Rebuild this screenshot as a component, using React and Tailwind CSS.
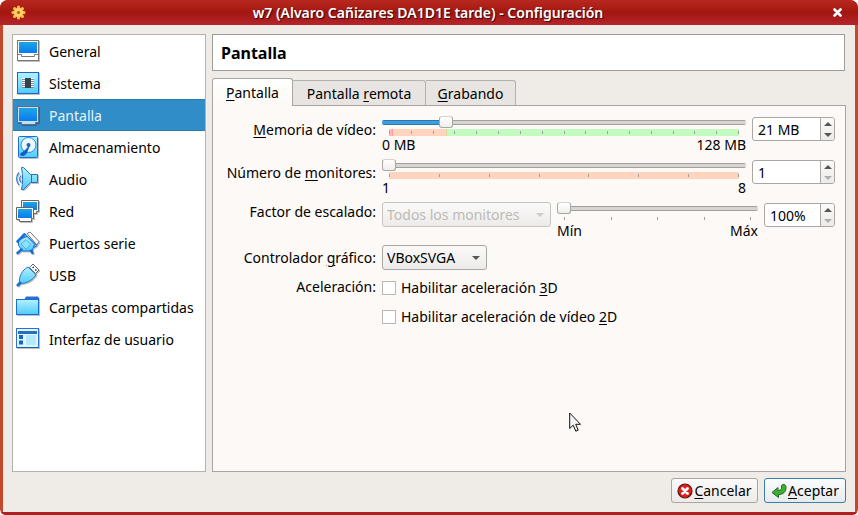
import React, { useState } from "react";

const Blues = () => (
  <svg width="0" height="0" className="absolute" aria-hidden="true">
    <defs>
      <linearGradient id="screen" x1="0" y1="0" x2="0" y2="1">
        <stop offset="0" stopColor="#1ca6e4" />
        <stop offset="1" stopColor="#0a7af0" />
      </linearGradient>
      <linearGradient id="ice" x1="0" y1="0" x2="0" y2="1">
        <stop offset="0" stopColor="#b4f1ff" />
        <stop offset="1" stopColor="#4fcbfb" />
      </linearGradient>
    </defs>
  </svg>
);

const Icon = ({ children }) => (
  <svg width="24" height="24" viewBox="0 0 24 24" className="shrink-0 drop-shadow-[1px_1px_0px_rgba(0,0,0,0.25)]" aria-hidden="true">
    {children}
  </svg>
);

const GeneralIcon = () => (
  <Icon>
    <rect x="1.5" y="1.5" width="21" height="20" fill="#fff" stroke="#777" />
    <rect x="3" y="3" width="18" height="11" fill="url(#screen)" />
    <path d="M1.500 15.500H5.500V17.500H18.500V15.500H22.500" fill="none" stroke="#777" />
  </Icon>
);

const SystemIcon = () => (
  <Icon>
    <rect x="1.500" y="1.500" width="21" height="21" fill="url(#ice)" stroke="#1a66cc" />
    <path d="M6 7.500H18M6 9.500H18M6 11.500H18M6 13.500H18M6 15.500H18" stroke="#fff" />
    <path d="M6 8.500H18M6 10.500H18M6 12.500H18M6 14.500H18M6 16.500H18" stroke="#6f8ea5" />
    <rect x="9" y="7" width="6" height="10" fill="#36404f" />
  </Icon>
);

const DisplayIcon = () => (
  <Icon>
    <path d="M1.500 3.500H22.500V19.500H19.500V21.500H5.500V19.500H1.500Z" fill="#c4def2" stroke="#5b7182" />
    <rect x="3" y="5" width="18" height="13" fill="url(#screen)" />
  </Icon>
);

const StorageIcon = () => (
  <Icon>
    <rect x="2.500" y="1.500" width="19" height="21" rx="1" fill="url(#ice)" stroke="#1a6ed2" />
    <circle cx="12.500" cy="10" r="7.500" fill="#e8faff" stroke="#2f86dc" />
    <circle cx="12.500" cy="10" r="2" fill="#3a5d9c" />
    <path d="M13 11.500L10.500 18C9 20.500 5 21.500 4.500 19.500C4.500 17.500 8 17.500 9.500 15Z" fill="#0f5fc4" stroke="#0f5fc4" />
  </Icon>
);

const AudioIcon = () => (
  <Icon>
    <path d="M3 5.500C-0.200 9 -0.200 14.500 3 18M5 8.500C3.500 10.500 3.500 13.500 5 15.500" fill="none" stroke="#2f7cd0" strokeWidth="1.200" />
    <path d="M5.500 0.500H7.500L14.500 7.500H21.500V15.500H14.500L7.500 22.500H5.500C7 16 7 8.500 5.500 0.500Z" fill="url(#ice)" stroke="#2a70c4" strokeLinejoin="round" />
    <path d="M15.500 7.500V15.500" stroke="#2a70c4" />
  </Icon>
);

const NetworkIcon = () => (
  <Icon>
    <path d="M5.500 1.500H22.500V12.500H20.500V14.500H8.500V12.500H5.500Z" fill="#fff" stroke="#666" />
    <rect x="7" y="3" width="14" height="8" fill="url(#screen)" />
    <path d="M0.500 8.500H17.500V19.500H15.500V22.500H3.500V20.500H0.500Z" fill="#fff" stroke="#666" />
    <rect x="2" y="10" width="14" height="9" fill="url(#screen)" />
  </Icon>
);

const SerialIcon = () => (
  <Icon>
    <path d="M11 2.500L14 1L23 10.500L21 14Z" fill="#fff" stroke="#777" />
    <path d="M8.500 2.500L21 14.500L18 16.500L6 4.500Z" fill="#6ab9f2" stroke="#1a6ed2" />
    <path d="M2.500 9L7 7L11 5.500L18.500 13L16 20H6L2.500 14Z" fill="url(#ice)" stroke="#1a6ed2" strokeLinejoin="round" />
    <path d="M1.500 10.500L8.500 3.500M5.500 18.500L1.500 22M15 19.500L16.500 22" stroke="#1a6ed2" strokeWidth="2.500" strokeLinecap="round" />
    <path d="M5 13L10 8.500L15 13.500L10 18Z" fill="#8be2ff" stroke="#59aee8" />
  </Icon>
);

const UsbIcon = () => (
  <Icon>
    <path d="M13.500 4.500L17 1L23 7L19.500 10.500Z" fill="#fff" stroke="#666" />
    <path d="M16.500 4.500H18M19 7H20.500" stroke="#333" strokeWidth="1.500" />
    <path d="M12 4L20 11.500C18 16 11 21 3.500 20.500C2.500 14 6 7 12 4Z" fill="url(#ice)" stroke="#2b74b8" strokeLinejoin="round" />
    <path d="M2 22L4 20" stroke="#1a6ed2" strokeWidth="3" strokeLinecap="round" />
  </Icon>
);

const FolderIcon = () => (
  <Icon>
    <path d="M8 5L10 1.500H22L23 3V8H8Z" fill="#2a72cf" />
    <rect x="0.500" y="4.500" width="22" height="15" fill="url(#ice)" stroke="#1a6ed2" />
  </Icon>
);

const InterfaceIcon = () => (
  <Icon>
    <rect x="0.500" y="1.500" width="22" height="19" fill="#dff6ff" stroke="#2a72cf" />
    <rect x="2" y="4" width="19" height="3" fill="#2a6cc4" />
    <path d="M3 8H7V12H3ZM3 13.500H7V17.500H3Z" fill="#1565c0" />
    <rect x="10" y="8" width="10" height="10" fill="#b4e9fb" />
    <path d="M1 20.500H22.500" stroke="#0d62bd" />
  </Icon>
);

const SECTIONS = [
  ["General", GeneralIcon],
  ["Sistema", SystemIcon],
  ["Pantalla", DisplayIcon],
  ["Almacenamiento", StorageIcon],
  ["Audio", AudioIcon],
  ["Red", NetworkIcon],
  ["Puertos serie", SerialIcon],
  ["USB", UsbIcon],
  ["Carpetas compartidas", FolderIcon],
  ["Interfaz de usuario", InterfaceIcon],
];

const Key = ({ children }) => <u className="underline decoration-1 underline-offset-2">{children}</u>;

const Ticks = ({ count, className = "" }) => (
  <div className={`mx-[7px] mt-px flex h-[7px] items-center justify-between ${className}`} aria-hidden="true">
    {Array.from({ length: count }, (_, i) => (
      <span key={i} className="h-[3px] w-px bg-[#a39d98]" />
    ))}
  </div>
);

function Slider({ id, label, min, max, value, onChange, ticks, low, high, band, filled }) {
  const fill = filled
    ? "[&::-webkit-slider-runnable-track]:bg-[linear-gradient(180deg,rgba(0,0,0,0.25)_1px,transparent_1px,transparent_4px,rgba(0,0,0,0.25)_4px),linear-gradient(90deg,#3d9de0_17%,#d8d5d1_17%)]"
    : "[&::-webkit-slider-runnable-track]:bg-[linear-gradient(180deg,rgba(0,0,0,0.25)_1px,transparent_1px,transparent_4px,rgba(0,0,0,0.25)_4px),linear-gradient(90deg,#d8d5d1,#d8d5d1)]";
  return (
    <div className="min-w-0 flex-1">
      <input
        id={id}
        type="range"
        aria-label={label}
        min={min}
        max={max}
        value={value}
        onChange={(e) => onChange(Number(e.target.value))}
        className={`block h-3 w-full appearance-none bg-transparent [&::-webkit-slider-runnable-track]:h-[5px] [&::-webkit-slider-runnable-track]:rounded-xs [&::-webkit-slider-thumb]:-mt-1 [&::-webkit-slider-thumb]:h-3 [&::-webkit-slider-thumb]:w-[14px] [&::-webkit-slider-thumb]:appearance-none [&::-webkit-slider-thumb]:rounded-[3px] [&::-webkit-slider-thumb]:border [&::-webkit-slider-thumb]:border-[#aaa7a3] [&::-webkit-slider-thumb]:border-t-[#d6d3d0] [&::-webkit-slider-thumb]:bg-linear-to-b [&::-webkit-slider-thumb]:from-white [&::-webkit-slider-thumb]:to-[#f0eeec] ${fill}`}
      />
      <Ticks count={ticks} className={band} />
      <div className="mt-px flex justify-between leading-4">
        <span>{low}</span>
        <span>{high}</span>
      </div>
    </div>
  );
}

function SpinBox({ id, value, width, atMin, label }) {
  return (
    <div className={`mt-px flex h-6 shrink-0 overflow-hidden rounded-[3px] border border-[#aaa7a3] bg-white ${width}`}>
      <input id={id} aria-label={label} defaultValue={value} className="w-0 min-w-0 flex-1 pt-0.5 pl-[5px] outline-none" />
      <div className="flex w-[14px] flex-col border-l border-[#aaa7a3] bg-linear-to-b from-[#fbfaf9] to-[#edebe9]">
        <button aria-label="Aumentar" className="flex flex-1 items-center justify-center text-[#555]">
          <svg width="8" height="4" viewBox="0 0 8 4"><path d="M0 4L4 0L8 4Z" fill="currentColor" /></svg>
        </button>
        <button aria-label="Reducir" className={`flex flex-1 items-center justify-center ${atMin ? "text-[#b0aeac]" : "text-[#555]"}`}>
          <svg width="8" height="4" viewBox="0 0 8 4"><path d="M0 0L4 4L8 0Z" fill="currentColor" /></svg>
        </button>
      </div>
    </div>
  );
}

function Combo({ id, label, value, width, disabled }) {
  return (
    <div className={`relative h-[25px] shrink-0 ${width} ${disabled ? "text-[#bdbab7]" : "text-black"}`}>
      <select
        id={id}
        aria-label={label}
        disabled={disabled}
        className={`h-full w-full appearance-none rounded-[3px] border bg-linear-to-b from-[#fbfaf9] to-[#ecebe9] pl-1 opacity-100 ${disabled ? "border-[#c6c3c0]" : "border-[#aaa7a3]"}`}
      >
        <option>{value}</option>
      </select>
      <svg width="8" height="4" viewBox="0 0 8 4" className={`pointer-events-none absolute top-[11px] right-[7px] ${disabled ? "text-[#cfccc9]" : "text-[#555]"}`}>
        <path d="M0 0L4 4L8 0Z" fill="currentColor" />
      </svg>
    </div>
  );
}

const Check = ({ id, children }) => (
  <div className="flex h-[23px] items-center gap-[5px]">
    <input id={id} type="checkbox" className="size-[14px] appearance-none border border-[#bbb8b4] bg-white checked:bg-[#308cc6]" />
    <label htmlFor={id}>{children}</label>
  </div>
);

export default function App() {
  const [memory, setMemory] = useState(21);
  const [monitors, setMonitors] = useState(1);
  const [scale, setScale] = useState(100);

  return (
    <div className="flex min-h-screen flex-col bg-white font-['Noto_Sans','Open_Sans',sans-serif] text-[14px] leading-5 text-black">
      <Blues />
      <div className="flex flex-1 flex-col overflow-hidden rounded-t-lg rounded-b-md bg-[#c4482c]">
        <header className="flex h-[25px] items-center bg-linear-to-b from-[#b8281f] via-[#a3160f] to-[#b5242a] pr-[13px] pl-[11px] text-white">
          <svg width="15" height="15" viewBox="0 0 15 15" aria-hidden="true">
            <g stroke="#ffbd3b" strokeWidth="3.200" strokeLinecap="round">
              <path d="M7.500 2V13M2 7.500H13M3.600 3.600L11.400 11.400M11.400 3.600L3.600 11.400" />
            </g>
            <circle cx="7.500" cy="7.500" r="4.500" fill="#ffd166" />
            <circle cx="7.500" cy="7.500" r="1.500" fill="#c4561a" />
          </svg>
          <h1 className="flex-1 text-center font-semibold text-shadow-[1px_1px_1px_rgba(0,0,0,0.7)]">
            w7 (Alvaro Cañizares DA1D1E tarde) - Configuración
          </h1>
          <button aria-label="Cerrar" className="flex w-[15px] justify-center">
            <svg width="9" height="9" viewBox="0 0 9 9"><path d="M1.500 1.500L7.500 7.500M7.500 1.500L1.500 7.500" stroke="#fff" strokeWidth="2.600" strokeLinecap="round" /></svg>
          </button>
        </header>

        <div className="mx-[3px] flex flex-1 flex-col gap-[6px] bg-[#efebe7] p-[9px]">
          <div className="flex flex-1 gap-[6px]">
            <nav className="w-[194px] shrink-0 border border-[#b5b2ae] bg-white">
              {SECTIONS.map(([name, Glyph]) => (
                <a
                  key={name}
                  href="#"
                  className={`flex h-8 items-center gap-[9px] pl-[3px] whitespace-nowrap ${name === "Pantalla" ? "border-y border-[#2a7db1] bg-[#308dc8] text-[#e8f3fa]" : ""}`}
                >
                  <Glyph />
                  <span className="pt-0.5">{name}</span>
                </a>
              ))}
            </nav>

            <main className="flex min-w-0 flex-1 flex-col">
              <h2 className="mr-px flex h-[37px] items-center border border-[#a09c98] bg-white pl-2 text-[16px] font-bold">Pantalla</h2>
              <div role="tablist" className="mt-[7px] flex items-end">
                <button role="tab" aria-selected="true" className="relative -mb-px h-7 w-[81px] rounded-t-[3px] border border-b-0 border-[#aaa7a3] bg-linear-to-b from-white to-[#fdf9f6]">
                  <Key>P</Key>antalla
                </button>
                <button role="tab" className="h-[25px] w-[133px] rounded-tr-[3px] border-t border-r border-[#b5b2ae] bg-[#e8e4e1] pt-0.5">
                  Pantalla <Key>r</Key>emota
                </button>
                <button role="tab" className="h-[25px] w-[90px] rounded-tr-[3px] border-t border-r border-[#b5b2ae] bg-[#e8e4e1] pt-0.5">
                  <Key>G</Key>rabando
                </button>
              </div>

              <section className="grid flex-1 grid-cols-[153px_minmax(0,1fr)] content-start gap-[6px] border border-[#a8a4a1] bg-[#fdf9f6] p-[10px] [&>label]:text-right [&>label]:whitespace-nowrap">
                <label htmlFor="memory" className="pt-1"><Key>M</Key>emoria de vídeo:</label>
                <div className="flex gap-[6px]">
                  <Slider id="memory-slider" label="Memoria de vídeo" min={0} max={128} value={memory} onChange={setMemory} ticks={17} low="0 MB" high="128 MB" filled
                    band="bg-[linear-gradient(90deg,#ffb9b4_0px,#ffb9b4_3px,#ff9f98_3px,#ff9f98_4px,#fed4be_4px,#fed4be_57px,#e2d893_57px,#e2d893_58px,#c3fac0_58px)]" />
                  <SpinBox id="memory" label="Memoria de vídeo" value="21 MB" width="w-[83px]" />
                </div>

                <label htmlFor="monitors" className="pt-1">Número de <Key>m</Key>onitores:</label>
                <div className="flex gap-[6px]">
                  <Slider id="monitors-slider" label="Número de monitores" min={1} max={8} value={monitors} onChange={setMonitors} ticks={8} low="1" high="8" band="bg-[#fed4be]" />
                  <SpinBox id="monitors" label="Número de monitores" value="1" width="w-[83px]" atMin />
                </div>

                <label htmlFor="scale-target">Factor de escalado:</label>
                <div className="flex gap-[6px]">
                  <Combo id="scale-target" label="Factor de escalado" value="Todos los monitores" width="w-[169px]" disabled />
                  <Slider id="scale-slider" label="Escala" min={100} max={200} value={scale} onChange={setScale} ticks={5} low="Mín" high="Máx" />
                  <SpinBox id="scale" label="Escala" value="100%" width="w-[71px]" atMin />
                </div>

                <label htmlFor="controller" className="pt-[3px]">Controlador <Key>g</Key>ráfico:</label>
                <Combo id="controller" label="Controlador gráfico" value="VBoxSVGA" width="w-[105px]" />

                <span className="pt-px text-right">Aceleración:</span>
                <Check id="accel3d">Habilitar aceleración <Key>3</Key>D</Check>
                <span />
                <Check id="accel2d">Habilitar aceleración de vídeo <Key>2</Key>D</Check>
              </section>
            </main>
          </div>

          <footer className="flex justify-end gap-[6px]">
            <button className="flex h-[25px] w-[87px] items-center justify-center gap-px rounded-[3px] border border-[#aaa7a3] bg-linear-to-b from-[#fbfaf9] to-[#edebe9]">
              <svg width="16" height="16" viewBox="0 0 16 16" className="shrink-0" aria-hidden="true">
                <circle cx="8" cy="8" r="7" fill="#e0201b" stroke="#5c1210" strokeWidth="1.200" />
                <path d="M5.500 5.500L10.500 10.500M10.500 5.500L5.500 10.500" stroke="#fff" strokeWidth="2.800" strokeLinecap="round" />
              </svg>
              <span><Key>C</Key>ancelar</span>
            </button>
            <button className="flex h-[25px] w-[82px] items-center justify-center gap-px rounded-[3px] border border-[#3a7fa8] bg-linear-to-b from-[#fbfcfd] to-[#e6ebed]">
              <svg width="16" height="16" viewBox="0 0 16 16" className="shrink-0" aria-hidden="true">
                <path d="M10.500 2.500C12 0.500 15 1 15 4.500C15 9 12 11.500 7.500 11.500V14.500L1 9.500L7 4.500V7.500C9.500 7.500 11 6.500 10.500 2.500Z" fill="#3fae35" stroke="#1c6a1b" strokeLinejoin="round" />
              </svg>
              <span><Key>A</Key>ceptar</span>
            </button>
          </footer>
        </div>
        <div className="h-[3px] bg-[#b0201f]" />
      </div>

      <svg width="13" height="21" viewBox="0 0 13 21" className="pointer-events-none absolute top-[412px] left-[569px]" aria-hidden="true">
        <path d="M0.700 1V16.500L4.200 13.200L6.800 19.200L9.200 18.200L6.700 12.300H11.500Z" fill="#f4f4f4" stroke="#111" />
      </svg>
    </div>
  );
}
